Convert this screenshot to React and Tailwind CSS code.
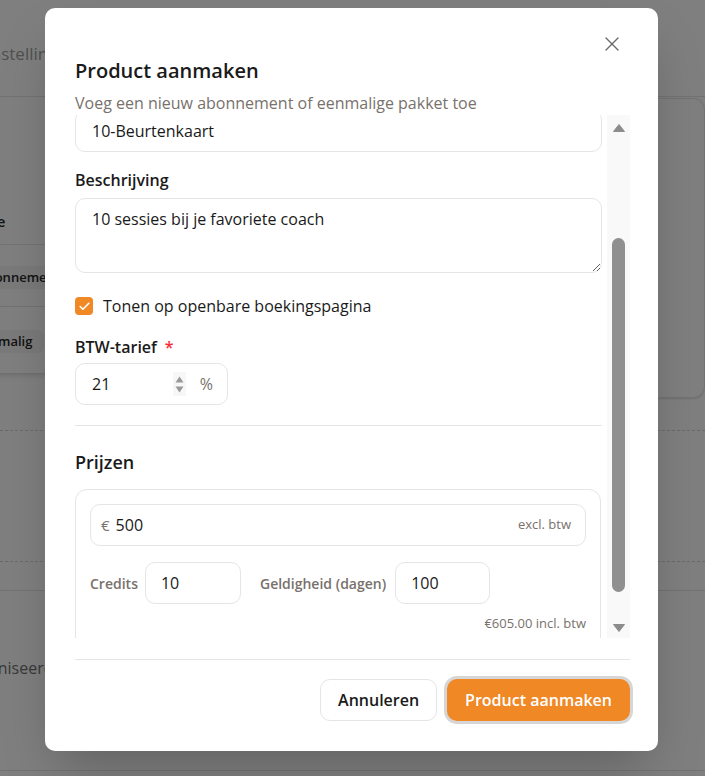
import React, { useLayoutEffect, useRef } from 'react';
import { X, Check } from 'lucide-react';

const Triangle = ({ up }) => (
  <svg width="12" height="8" viewBox="0 0 12 8" className="block">
    <path
      d={up ? 'M6 0.5 11.5 7.5H0.5Z' : 'M0.5 0.5H11.5L6 7.5Z'}
      fill="#8c8c8c"
      strokeLinejoin="round"
      stroke="#8c8c8c"
    />
  </svg>
);

const Spinner = () => (
  <div className="flex flex-col items-center justify-center gap-[3px] w-[13px] h-[24px] bg-[#f7f7f7]">
    <svg width="9" height="7" viewBox="0 0 9 7"><path d="M4.5 0.5 8.5 6.5H0.5Z" fill="#999" /></svg>
    <svg width="9" height="7" viewBox="0 0 9 7"><path d="M0.5 0.5H8.5L4.5 6.5Z" fill="#999" /></svg>
  </div>
);

// page underneath the dialog
const Backdrop = () => (
  <div className="h-[776px] overflow-hidden bg-white text-neutral-800">
    <div className="h-[97px] border-b border-neutral-200 flex items-end pb-[30px]">
      <span className="-ml-[14px] text-[17px] text-neutral-400">Instellingen</span>
    </div>
    <div className="flex gap-[30px] -ml-[220px]">
      <div className="w-[873px] h-[276px] rounded-b-xl shadow-md bg-white">
        <div className="h-[148px] border-b border-neutral-200 flex items-end pb-[12px] pl-[191px]">
          <span className="text-[15px] font-semibold">Type</span>
        </div>
        <div className="h-[62px] border-b border-neutral-200 flex items-center pl-[186px] pt-[4px]">
          <span className="px-3 py-[2px] rounded-md bg-neutral-100 text-[13px] font-semibold">Abonnement</span>
        </div>
        <div className="h-[65px] flex items-center pl-[183px] pt-[4px]">
          <span className="px-3 py-[2px] rounded-md bg-neutral-100 text-[13px] font-semibold">Eenmalig</span>
        </div>
      </div>
      <div className="w-[300px] h-[300px] mt-px rounded-xl border border-neutral-200 shadow-sm bg-white" />
    </div>
    <div className="mt-[32px] border-t border-dashed border-neutral-300 h-[131px]" />
    <div className="border-t border-dashed border-neutral-300 h-[29px]" />
    <div className="border-t border-neutral-200 h-[180px] pt-[65px]">
      <span className="block -ml-[82px] text-[16px] text-neutral-500">Gesynchroniseerd</span>
    </div>
    <div className="border-t border-neutral-200" />
  </div>
);

const Label = ({ children, required, gap = 'mb-[6px]' }) => (
  <div className={`text-[16px] leading-6 font-semibold text-[#1a1a1a] ${gap}`}>
    {children}
    {required && <span className="ml-[8px] text-red-500">*</span>}
  </div>
);

const inputBox = 'h-[42px] rounded-[10px] border border-[#e5e5e5] bg-white flex items-center';

export default function App() {
  const scrollRef = useRef(null);
  const nameRef = useRef(null);

  useLayoutEffect(() => {
    const box = scrollRef.current;
    const name = nameRef.current;
    box.scrollTop = name.offsetTop + name.offsetHeight - 37;
  }, []);

  return (
    <div className="relative h-[776px] overflow-hidden font-['Open_Sans','Noto_Sans',sans-serif]">
      <Backdrop />
      <div className="absolute inset-0 bg-black/50" />

      <div className="absolute left-[45px] top-[8px] w-[613px] h-[743px] rounded-[10px] bg-white shadow-2xl flex flex-col">
        <button className="absolute right-[34px] top-[24px] text-[#6b6b6b]">
          <X size={24} strokeWidth={1.4} />
        </button>

        <div className="pt-[49px] pl-[30px] pr-[28px]">
          <h2 className="text-[20px] leading-7 font-semibold text-[#1a1a1a]">Product aanmaken</h2>
          <p className="mt-[6px] text-[16px] leading-6 text-[#78716c]">
            Voeg een nieuw abonnement of eenmalige pakket toe
          </p>
        </div>

        <div className="flex h-[523px] pl-[30px] pr-[28px]">
          <div ref={scrollRef} className="relative flex-1 overflow-hidden">
            <div className="pb-[20px]">
              <Label>Type</Label>
              <div className="flex gap-2 mb-[20px]">
                <div className="h-[42px] flex-1 rounded-[10px] border-2 border-[#f08826] bg-orange-50 flex items-center justify-center font-semibold">Abonnement</div>
                <div className="h-[42px] flex-1 rounded-[10px] border border-[#e5e5e5] flex items-center justify-center font-semibold">Eenmalig</div>
              </div>

              <Label required>Naam</Label>
              <div ref={nameRef} className={`${inputBox} px-[16px] text-[16px] text-[#1a1a1a]`}>
                10-Beurtenkaart
              </div>

              <div className="mt-[16px]">
                <Label>Beschrijving</Label>
                <textarea
                  readOnly
                  defaultValue="10 sessies bij je favoriete coach"
                  className="block w-full h-[75px] rounded-[10px] border border-[#e5e5e5] px-[16px] py-[8px] text-[16px] leading-6 text-[#1a1a1a] outline-none"
                />
              </div>

              <div className="mt-[21px] flex items-center gap-[10px] h-[24px]">
                <div className="w-[18px] h-[18px] rounded-[4px] bg-[#f08826] flex items-center justify-center">
                  <Check size={13} strokeWidth={3} className="text-white" />
                </div>
                <span className="text-[16px] text-[#1a1a1a]">Tonen op openbare boekingspagina</span>
              </div>

              <div className="mt-[17px]">
                <Label required gap="mb-[4px]">BTW-tarief</Label>
                <div className={`${inputBox} w-[153px] pl-[16px] pr-[14px] text-[16px] text-[#1a1a1a]`}>
                  <span className="flex-1">21</span>
                  <Spinner />
                  <span className="ml-[14px] text-[#78716c]">%</span>
                </div>
              </div>

              <div className="mt-[20px] border-t border-[#e5e5e5]" />

              <h3 className="mt-[22px] text-[18px] leading-7 font-semibold text-[#1a1a1a]">Prijzen</h3>

              <div className="mt-[13px] mr-px rounded-[12px] border border-[#e5e5e5] p-[14px]">
                <div className={`${inputBox} pl-[10px] pr-[14px]`}>
                  <span className="text-[15px] text-[#78716c]">€</span>
                  <span className="ml-[6px] flex-1 text-[16px] text-[#1a1a1a]">500</span>
                  <span className="text-[13px] text-[#78716c]">excl. btw</span>
                </div>
                <div className="mt-[16px] flex items-center">
                  <span className="text-[14px] font-semibold text-[#78716c]">Credits</span>
                  <div className={`${inputBox} ml-[7px] w-[96px] px-[15px] text-[16px] text-[#1a1a1a]`}>10</div>
                  <span className="ml-[19px] text-[14px] font-semibold text-[#78716c]">Geldigheid (dagen)</span>
                  <div className={`${inputBox} ml-[9px] w-[95px] px-[15px] text-[16px] text-[#1a1a1a]`}>100</div>
                </div>
                <div className="mt-[10px] text-right text-[13px] text-[#78716c]">€605.00 incl. btw</div>
              </div>
            </div>
          </div>

          <div className="ml-[5px] w-[23px] bg-[#f9f9f9] flex flex-col items-center">
            <div className="h-[24px] pt-px flex items-center"><Triangle up /></div>
            <div className="mt-[99px] w-[13px] h-[354px] rounded-full bg-[#8f8f8f]" />
            <div className="mt-auto h-[20px] flex items-center"><Triangle /></div>
          </div>
        </div>

        <div className="mt-[21px] mr-[28px] ml-[30px] border-t border-[#e5e5e5] pt-[19px] flex justify-end gap-[10px]">
          <button className="h-[42px] px-[17px] rounded-[10px] border border-[#e5e5e5] bg-white text-[16px] font-semibold text-[#1a1a1a]">
            Annuleren
          </button>
          <button className="h-[42px] px-[18px] rounded-[10px] bg-[#f08826] text-[16px] font-semibold text-white ring-[3px] ring-[#d6d6d6]">
            Product aanmaken
          </button>
        </div>
      </div>
    </div>
  );
}
